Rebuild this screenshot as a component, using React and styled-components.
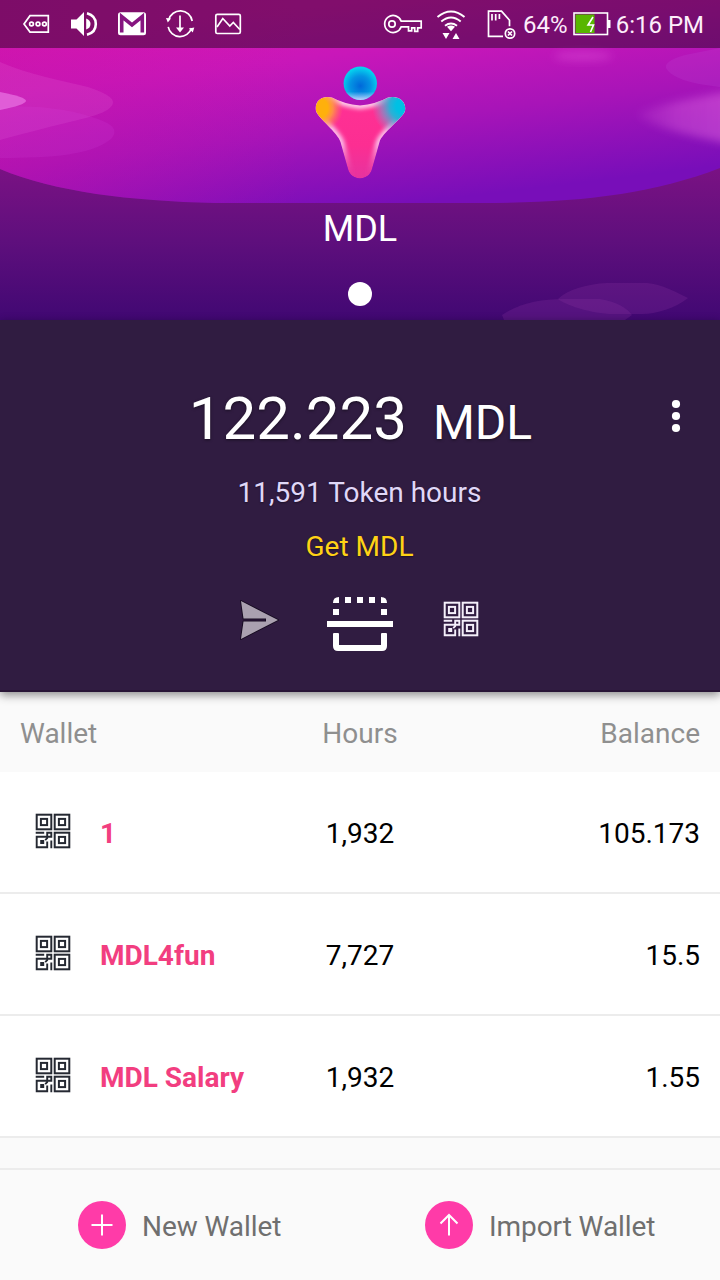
import React from 'react';
import styled, { createGlobalStyle } from 'styled-components';

const GlobalStyle = createGlobalStyle`
  * { box-sizing: border-box; }
  body { margin: 0; background: #fafafa; font-family: Roboto, sans-serif; }
  svg { display: block; flex: none; }
`;

const Screen = styled.main`
  width: 720px;
  height: 1280px;
  display: flex;
  flex-direction: column;
  background: #fafafa;
  overflow: hidden;
`;

const Header = styled.header`
  position: relative;
  height: 320px;
  flex: none;
  display: flex;
  flex-direction: column;
  align-items: center;
  color: #fff;
`;

const HeaderArt = styled.svg`
  position: absolute;
  inset: 0;
`;

const StatusBar = styled.div`
  position: relative;
  width: 100%;
  height: 48px;
  padding: 0 16px 0 22px;
  display: flex;
  align-items: center;
  justify-content: space-between;
  background: rgba(0, 0, 0, 0.4);
  color: #fdeefb;
  font-size: 24px;
  line-height: 48px;
`;

const StatusGroup = styled.div`
  display: flex;
  align-items: center;
`;

const StatusText = styled.span`
  margin-left: ${(p) => p.$gap}px;
  padding-top: 2px;
  white-space: nowrap;
`;

const BatterySlot = styled.div`
  margin-left: 5px;
`;

const Logo = styled.svg`
  position: relative;
  margin-top: 14px;
`;

const CoinName = styled.h1`
  position: relative;
  margin: 28px 0 0;
  font-size: 36px;
  font-weight: 400;
  line-height: 42px;
`;

const PageDot = styled.span`
  position: relative;
  width: 24px;
  height: 24px;
  margin-top: 32px;
  border-radius: 50%;
  background: #fff;
`;

const Summary = styled.section`
  position: relative;
  height: 372px;
  flex: none;
  display: flex;
  flex-direction: column;
  align-items: center;
  padding-top: 64px;
  background: #301c41;
  border-bottom: 2px solid #281536;
  box-shadow: 0 3px 9px rgba(0, 0, 0, 0.45);
`;

const BalanceRow = styled.div`
  width: 100%;
  display: grid;
  grid-template-columns: 88px 1fr 88px;
  align-items: center;
`;

const Balance = styled.div`
  grid-column: 2;
  display: flex;
  align-items: baseline;
  justify-content: center;
  gap: 26px;
  padding-left: 1px;
  color: #fff;
  font-size: 60px;
  line-height: 70px;
  text-shadow: 0 1px 3px rgba(0, 0, 0, 0.5);
`;

const Unit = styled.span`
  font-size: 48px;
`;

const MenuButton = styled.button`
  display: flex;
  justify-content: center;
  padding: 0 0 10px;
  border: 0;
  background: none;
`;

const SummaryText = styled.div`
  margin-top: ${(p) => p.$top}px;
  padding-right: 1px;
  color: ${(p) => p.$color};
  font-size: 28px;
  line-height: 34px;
  text-shadow: 0 1px 2px rgba(0, 0, 0, 0.4);
`;

const Actions = styled.div`
  display: flex;
  align-items: center;
  margin-top: 27px;
  height: 66px;
`;

const Action = styled.button`
  display: flex;
  padding: 0;
  margin: ${(p) => p.$margin || 0};
  border: 0;
  background: none;
`;

const ColumnHeads = styled.div`
  height: 80px;
  flex: none;
  display: grid;
  grid-template-columns: 1fr 119px 1fr;
  align-items: center;
  padding: 1px 20px 0;
  color: #8f8f8f;
  font-size: 28px;
`;

const Row = styled.div`
  height: 122px;
  flex: none;
  display: grid;
  grid-template-columns: 1fr 120px 1fr;
  align-items: center;
  padding: 0 20px;
  background: #fff;
  border-bottom: 2px solid #ececec;
  color: #000;
  font-size: 28px;
`;

const Cell = styled.div`
  text-align: ${(p) => p.$align || 'left'};
  padding-top: 3px;
  line-height: 34px;
  white-space: nowrap;
`;

const NameCell = styled.div`
  display: flex;
  align-items: center;
  gap: 29px;
  padding-left: 15px;

  svg { margin-bottom: 2px; }
`;

const WalletName = styled(Cell)`
  color: #f23e80;
  font-weight: 700;
`;

const Footer = styled.footer`
  margin-top: 30px;
  flex: 1;
  display: grid;
  grid-template-columns: 1fr 1fr;
  align-items: center;
  border-top: 2px solid #ececec;
`;

const FooterButton = styled.button`
  display: flex;
  align-items: center;
  gap: 16px;
  padding: 0 0 0 ${(p) => p.$indent}px;
  border: 0;
  background: none;
  color: #6f6f6f;
  font: 400 28px/34px Roboto, sans-serif;
  letter-spacing: -0.08px;
`;

const Circle = styled.span`
  width: 48px;
  height: 48px;
  display: flex;
  align-items: center;
  justify-content: center;
  border-radius: 50%;
  background: #ff3ba8;
`;

const FooterLabel = styled.span`
  padding-top: 4px;
`;

function LeftStatusIcons() {
  return (
    <svg width="224" height="48" viewBox="22 0 224 48" fill="none" stroke="#fff" strokeWidth="1.7">
      <path d="M24 24l6-8.3h18.3v16.4H30z" />
      <circle cx="31.5" cy="24" r="1.9" />
      <circle cx="38" cy="24" r="1.9" />
      <circle cx="44.4" cy="24" r="1.9" />
      <g stroke="none" fill="#fff">
        <path d="M71 19.5h5.5l7.5-7.5v24l-7.5-7.5H71z" />
        <path d="M86.2 18.5q4.3 1.5 4.3 5.5t-4.3 5.5z" />
        <rect x="118" y="12.3" width="28" height="23" rx="2.5" />
      </g>
      <path d="M87 13.2c5.500 1.500 8.800 5.500 8.800 10.800S92.500 33.300 87 34.800" strokeWidth="2.6" />
      <path d="M121.700 32.500V16.500l10.300 8.500 10.300-8.500v16" stroke="#861580" strokeWidth="3.600" />
      <path d="M168.700 20a12 12 0 0 1 23.500 1M191.500 28a12 12 0 0 1-23.300-1.200M180 15.500v14" />
      <path d="M166 18l5 .5-3.200 4zM194.300 27.500l-5.500 1 4 4zM176 27.500h8l-4 5z" fill="#fff" stroke="none" />
      <rect x="215.800" y="14.300" width="24.500" height="19.200" rx="1.500" />
      <path d="M217 27l5.800-8.500 7 7.500 3.500-3.500 6.500 7" />
    </svg>
  );
}

function RightStatusIcons() {
  return (
    <svg width="135" height="48" viewBox="384 0 135 48" fill="none" stroke="#fff" strokeWidth="1.7">
      <path d="M402.200 21.200a8.500 8.500 0 1 0 0 5.600h7.300v4h3.200v-3h3v3.500h3v-3.500h3.500v-6.600z" />
      <circle cx="393" cy="24" r="3.200" />
      <path d="M438.500 17q13.500-11 27 0M442.300 21.500q9.700-8 19.400 0M446 25.800q6-4.500 12 0" strokeWidth="2" />
      <path d="M448 26.700q4-2.500 8 0l-4 4.600zM443.500 33h7l-3.500 6zM453.500 39h7l-3.500-6z" fill="#fff" stroke="none" />
      <path d="M504 36.300h-14.500V11.200h13l8 9v6M493 14v6.500M496.700 14v6.500M500.400 14v5" />
      <circle cx="511" cy="33.500" r="4.700" />
      <path d="M509 31.500l4 4M513 31.500l-4 4" />
    </svg>
  );
}

function Battery() {
  return (
    <svg width="38" height="24" viewBox="0 0 38 24">
      <rect x="1" y="1" width="33.500" height="21.500" fill="none" stroke="#fff" strokeWidth="1.600" />
      <rect x="35" y="8" width="2.500" height="8" fill="#fff" />
      <rect x="2.500" y="2.500" width="19" height="18.500" fill="#58b600" />
      <path d="M20 5l-5 8h5.500l-3 7" fill="none" stroke="#fff" strokeWidth="1.600" />
    </svg>
  );
}

function QrIcon({ color }) {
  return (
    <svg width="36" height="36" viewBox="0 0 36 36" fill="none" stroke={color} strokeWidth="2">
      <rect x="1.700" y="1.700" width="14.600" height="14.600" />
      <rect x="19.700" y="1.700" width="14.600" height="14.600" />
      <rect x="19.700" y="19.700" width="14.600" height="14.600" />
      <rect x="5.900" y="5.900" width="6.200" height="6.200" />
      <rect x="23.900" y="5.900" width="6.200" height="6.200" />
      <rect x="23.900" y="23.900" width="6.200" height="6.200" />
      <path d="M.7 19.700h8.500M16.300 27.500v7.700M12.200 28.500v5.800H1.700V23.800h14.600v-4.100h-4.100v5.500l-2 2" strokeWidth="1.900" />
      <rect x="5.200" y="27" width="4" height="4" fill={color} stroke="none" />
    </svg>
  );
}

const BODY =
  'M316 111C314 101 322 95 332 97.500Q344 104 360 105.500Q376 104 388 97.500C398 95 407 101 405 111C403 118 382 133 379.500 142L372 169C369 181.500 351 181.500 348 169L340.500 142C338 133 318 118 316 111Z';

function CoinLogo() {
  return (
    <Logo width="96" height="118" viewBox="312 62 96 118">
      <defs>
        <radialGradient id="head" cx=".5" cy=".58" r=".55">
          <stop offset="0" stopColor="#0068da" />
          <stop offset=".55" stopColor="#0493e3" />
          <stop offset="1" stopColor="#05d4ef" />
        </radialGradient>
        <linearGradient id="chin" x1="0" y1="0" x2="0" y2="1">
          <stop offset=".75" stopColor="#c8c8ff" stopOpacity="0" />
          <stop offset="1" stopColor="#d9d0ff" stopOpacity=".9" />
        </linearGradient>
        <linearGradient id="torso" x1="0" y1="0" x2="0" y2="1">
          <stop offset="0" stopColor="#ff3194" />
          <stop offset=".6" stopColor="#fc2e92" />
          <stop offset="1" stopColor="#e6339f" />
        </linearGradient>
        <radialGradient id="leftHand" gradientUnits="userSpaceOnUse" cx="318" cy="108" r="25">
          <stop offset=".4" stopColor="#ffb00c" />
          <stop offset=".6" stopColor="#ff9e3c" stopOpacity=".85" />
          <stop offset="1" stopColor="#ff7560" stopOpacity="0" />
        </radialGradient>
        <radialGradient id="rightHand" gradientUnits="userSpaceOnUse" cx="404" cy="106" r="32">
          <stop offset=".25" stopColor="#00c0e4" />
          <stop offset=".45" stopColor="#2eafd5" />
          <stop offset=".7" stopColor="#7798cc" stopOpacity=".65" />
          <stop offset="1" stopColor="#a886ca" stopOpacity="0" />
        </radialGradient>
        <linearGradient id="edge" gradientUnits="userSpaceOnUse" x1="0" y1="96" x2="0" y2="176">
          <stop offset="0" stopColor="#ffd5ee" />
          <stop offset=".6" stopColor="#fbc1ed" />
          <stop offset="1" stopColor="#ec4bb0" stopOpacity="0" />
        </linearGradient>
        <clipPath id="bodyClip"><path d={BODY} /></clipPath>
        <filter id="soft"><feGaussianBlur stdDeviation="2.200" /></filter>
      </defs>
      <circle cx="360.300" cy="83.300" r="16.700" fill="url(#head)" />
      <circle cx="360.300" cy="83.300" r="16.700" fill="url(#chin)" />
      <g clipPath="url(#bodyClip)">
        <path d={BODY} fill="url(#torso)" />
        <path d={BODY} fill="none" stroke="url(#edge)" strokeWidth="7" filter="url(#soft)" />
        <path d={BODY} fill="url(#leftHand)" />
        <path d={BODY} fill="url(#rightHand)" />
      </g>
    </Logo>
  );
}

function Backdrop() {
  return (
    <HeaderArt width="720" height="320" viewBox="0 0 720 320">
      <defs>
        <linearGradient id="sky" gradientUnits="userSpaceOnUse" x1="345" y1="0" x2="370" y2="208">
          <stop offset="0" stopColor="#d818b4" />
          <stop offset=".25" stopColor="#c917b9" />
          <stop offset=".6" stopColor="#a814b8" />
          <stop offset="1" stopColor="#780eb9" />
        </linearGradient>
        <linearGradient id="ground" gradientUnits="userSpaceOnUse" x1="0" y1="160" x2="0" y2="320">
          <stop offset="0" stopColor="#7d1284" />
          <stop offset=".5" stopColor="#5f0f7d" />
          <stop offset="1" stopColor="#410873" />
        </linearGradient>
        <linearGradient id="leftShade" x1="0" y1="0" x2="1" y2="0">
          <stop offset="0" stopColor="#c411a5" stopOpacity=".4" />
          <stop offset="1" stopColor="#c411a5" stopOpacity="0" />
        </linearGradient>
        <linearGradient id="glow" gradientUnits="userSpaceOnUse" x1="637" y1="0" x2="720" y2="0">
          <stop offset="0" stopColor="#df62df" stopOpacity=".1" />
          <stop offset=".5" stopColor="#df62df" stopOpacity=".4" />
          <stop offset="1" stopColor="#df62df" stopOpacity=".5" />
        </linearGradient>
        <filter id="blurry" x="-30%" y="-60%" width="160%" height="220%"><feGaussianBlur stdDeviation="4" /></filter>
      </defs>
      <rect width="720" height="320" fill="url(#ground)" />
      <path d="M0 0H720V168C650 195 575 203 480 203H215C130 201 55 192 0 169Z" fill="url(#sky)" />
      <path d="M0 0H300V203H215C130 201 55 192 0 169Z" fill="url(#leftShade)" />
      <path d="M0 62C30 75 60 80 88 87C104 92 114 98 113 103C111 111 98 115 78 120C53 126 30 132 0 140Z" fill="#e96ee0" fillOpacity=".18" />
      <path d="M0 108C30 104 70 109 98 119C112 124 119 130 111 139C91 155 54 158 0 158Z" fill="#d74ce4" fillOpacity=".15" />
      <path d="M0 92Q26 97 26 101Q25 105 0 110Z" fill="#ee83eb" fillOpacity=".6" />
      <path d="M637 114C652 107 685 98 750 88V148C690 136 650 127 637 114Z" fill="url(#glow)" filter="url(#blurry)" />
      <ellipse cx="583" cy="56" rx="29" ry="5" fill="#e156dc" fillOpacity=".4" filter="url(#blurry)" />
      <path d="M666 68Q664 61 685 55L720 48V87Q673 82 666 68Z" fill="#c453dd" fillOpacity=".18" />
      <path d="M558 299C567 290 586 284 607 283H647C661 284 678 293 688 298C676 308 656 314 642 314H609C586 312 566 305 558 299Z" fill="#8e35a4" fillOpacity=".24" />
      <path d="M502 315C520 303 540 299 564 299H600C617 302 627 308 632 315L625 320H504Z" fill="#8e35a4" fillOpacity=".24" />
    </HeaderArt>
  );
}

function SendIcon() {
  return (
    <svg width="44" height="44" viewBox="0 0 44 44">
      <path d="M4 3L41 22 4 41 6.500 23.500H29V20.500H6.500z" fill="#aaa1b0" stroke="#160b20" strokeWidth="1.800" paintOrder="stroke" strokeLinejoin="round" />
    </svg>
  );
}

function ScanIcon() {
  return (
    <svg width="66" height="56" viewBox="0 0 66 56" fill="#fff">
      <path d="M6 7Q6 1 12 1V7zM60 7Q60 1 54 1V7z" />
      <path d="M18 1h6v6h-6zM30 1h6v6h-6zM42 1h6v6h-6zM6 13h6v6H6zM54 13h6v6h-6zM0 25h66v6H0z" />
      <path d="M6 38q0-1 1-1h4q1 0 1 1v11h42V38q0-1 1-1h4q1 0 1 1v12q0 5-5 5H11q-5 0-5-5z" />
    </svg>
  );
}

function MoreIcon() {
  return (
    <svg width="10" height="34" viewBox="0 0 10 34" fill="#fff">
      <circle cx="5" cy="5" r="4.100" />
      <circle cx="5" cy="17" r="4.100" />
      <circle cx="5" cy="29" r="4.100" />
    </svg>
  );
}

const wallets = [
  { name: '1', hours: '1,932', balance: '105.173' },
  { name: 'MDL4fun', hours: '7,727', balance: '15.5' },
  { name: 'MDL Salary', hours: '1,932', balance: '1.55' },
];

export default function App() {
  return (
    <>
      <GlobalStyle />
      <Screen>
        <Header>
          <Backdrop />
          <StatusBar>
            <LeftStatusIcons />
            <StatusGroup>
              <RightStatusIcons />
              <StatusText $gap={5}>64%</StatusText>
              <BatterySlot><Battery /></BatterySlot>
              <StatusText $gap={5}>6:16 PM</StatusText>
            </StatusGroup>
          </StatusBar>
          <CoinLogo />
          <CoinName>MDL</CoinName>
          <PageDot />
        </Header>
        <Summary>
          <BalanceRow>
            <Balance>
              <span>122.223</span>
              <Unit>MDL</Unit>
            </Balance>
            <MenuButton aria-label="Menu"><MoreIcon /></MenuButton>
          </BalanceRow>
          <SummaryText $top={18} $color="#e0d8f8">11,591 Token hours</SummaryText>
          <SummaryText $top={20} $color="#ffd216">Get MDL</SummaryText>
          <Actions>
            <Action aria-label="Send" $margin="0 46px 8px 0"><SendIcon /></Action>
            <Action aria-label="Scan" $margin="0 0 1px"><ScanIcon /></Action>
            <Action aria-label="Receive" $margin="0 4px 10px 50px"><QrIcon color="#f4effa" /></Action>
          </Actions>
        </Summary>
        <ColumnHeads>
          <Cell>Wallet</Cell>
          <Cell $align="center">Hours</Cell>
          <Cell $align="right">Balance</Cell>
        </ColumnHeads>
        {wallets.map((w) => (
          <Row key={w.name}>
            <NameCell>
              <QrIcon color="#252932" />
              <WalletName>{w.name}</WalletName>
            </NameCell>
            <Cell $align="center">{w.hours}</Cell>
            <Cell $align="right">{w.balance}</Cell>
          </Row>
        ))}
        <Footer>
          <FooterButton $indent={78}>
            <Circle>
              <svg width="24" height="24" viewBox="0 0 24 24" fill="none" stroke="#fff" strokeWidth="2">
                <path d="M1.500 12h21M12 1.500v21" />
              </svg>
            </Circle>
            <FooterLabel>New Wallet</FooterLabel>
          </FooterButton>
          <FooterButton $indent={65}>
            <Circle>
              <svg width="24" height="24" viewBox="0 0 24 24" fill="none" stroke="#fff" strokeWidth="2">
                <path d="M12 22.500V2M3.500 10.500L12 2l8.500 8.500" />
              </svg>
            </Circle>
            <FooterLabel>Import Wallet</FooterLabel>
          </FooterButton>
        </Footer>
      </Screen>
    </>
  );
}
